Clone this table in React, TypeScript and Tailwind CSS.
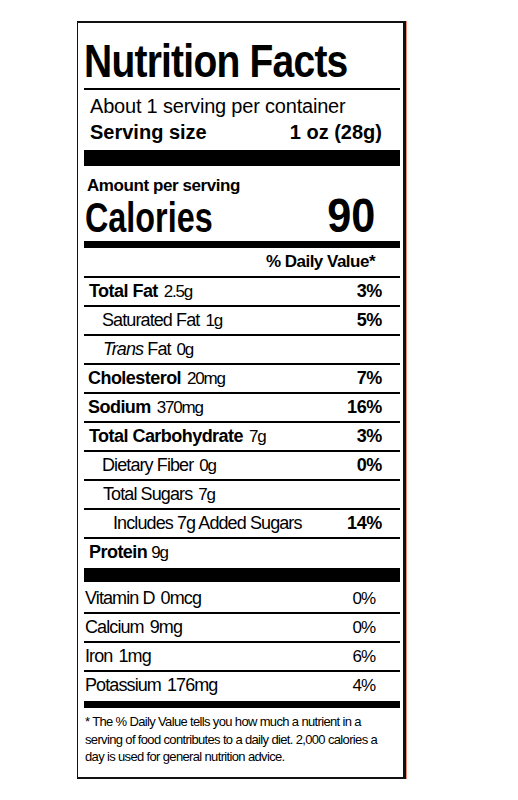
const sans = "font-['Liberation_Sans',Arial,sans-serif]";

type Nutrient = {
  label: string;
  amount: string;
  dv?: string;
  bold?: boolean;
  indent: string;
  italic?: string;
};

const nutrients: Nutrient[] = [
  { label: "Total Fat", amount: "2.5g", dv: "3%", bold: true, indent: "pl-[5px]" },
  { label: "Fat", amount: "1g", dv: "5%", indent: "pl-[18px]", italic: "Saturated" },
  { label: "Fat", amount: "0g", indent: "pl-[19px]", italic: "Trans" },
  { label: "Cholesterol", amount: "20mg", dv: "7%", bold: true, indent: "pl-[4px]" },
  { label: "Sodium", amount: "370mg", dv: "16%", bold: true, indent: "pl-[4px]" },
  { label: "Total Carbohydrate", amount: "7g", dv: "3%", bold: true, indent: "pl-[5px]" },
  { label: "Dietary Fiber", amount: "0g", dv: "0%", indent: "pl-[18px]" },
  { label: "Total Sugars", amount: "7g", indent: "pl-[19px]" },
  { label: "Includes 7g Added Sugars", amount: "", dv: "14%", indent: "pl-[29px]" },
];

const minerals = [
  { label: "Vitamin D", amount: "0mcg", dv: "0%" },
  { label: "Calcium", amount: "9mg", dv: "0%" },
  { label: "Iron", amount: "1mg", dv: "6%" },
  { label: "Potassium", amount: "176mg", dv: "4%" },
];

function NutrientRow({ n }: { n: Nutrient }) {
  return (
    <div className={`flex h-[29px] items-baseline justify-between border-b-2 border-black pr-[18px] text-[18px] leading-[27px] ${n.indent}`}>
      <div className="whitespace-nowrap">
        {n.italic === "Trans" ? (
          <span className="italic tracking-[-0.05em]">Trans </span>
        ) : null}
        {n.italic === "Saturated" ? (
          <span className="tracking-[-0.05em]">Saturated </span>
        ) : null}
        <span className={n.bold ? "font-bold tracking-[-0.03em]" : "tracking-[-0.05em]"}>{n.label}</span>
        {n.amount && <span className="ml-[6px] text-[17px] tracking-[-0.07em]">{n.amount}</span>}
      </div>
      {n.dv && <span className="font-bold tracking-[-0.02em]">{n.dv}</span>}
    </div>
  );
}

export default function App() {
  return (
    <div className={`h-[800px] w-[518px] bg-white pl-[77px] pt-[21px] text-black ${sans}`}>
      <div className="h-[758px] w-[329px] border-b-2 border-l border-r-[3px] border-t-2 border-[#111] pl-[6px] pr-[3px] pt-[14px] shadow-[1px_0_0_#f08a74]">
        {/* heading */}
        <div className="h-[47px] whitespace-nowrap text-[47px] font-bold leading-[47px]">
          <span className="inline-block origin-left scale-x-[0.83] tracking-[-0.02em]">Nutrition Facts</span>
        </div>
        <div className="mt-[4px] h-[2px] bg-black" />

        <div className="mt-[6px] whitespace-nowrap pl-[6px] text-[20px] leading-[20px] tracking-[-0.01em]">
          About 1 serving per container
        </div>
        <div className="mt-[6px] flex justify-between pl-[6px] pr-[18px] text-[20px] font-bold leading-[20px]">
          <span>Serving size</span>
          <span>1 oz (28g)</span>
        </div>
        <div className="mt-[8px] h-[16px] bg-black" />

        {/* calories */}
        <div className="mt-[11px] pl-[3px] text-[17px] font-bold leading-[17px] tracking-[-0.025em]">
          Amount per serving
        </div>
        <div className="mt-[1px] flex items-baseline justify-between pl-[1px] pr-[25px] font-bold">
          <span className="inline-block origin-left scale-x-[0.77] text-[42px] leading-[42px]">Calories</span>
          <span className="inline-block origin-right scale-x-[0.9] text-[48px] leading-[42px]">90</span>
        </div>
        <div className="mt-[2px] h-[7px] bg-black" />

        <div className="flex h-[30px] justify-end border-b-2 border-black pr-[25px] text-[17px] font-bold leading-[28px] tracking-[-0.03em]">
          % Daily Value*
        </div>

        {nutrients.map((n, i) => (
          <NutrientRow key={i} n={n} />
        ))}

        <div className="h-[29px] pl-[5px] text-[18px] leading-[27px]">
          <span className="font-bold tracking-[-0.03em]">Protein</span>
          <span className="ml-[4px] text-[17px] tracking-[-0.07em]">9g</span>
        </div>
        <div className="h-[14px] bg-black" />

        {/* vitamins and minerals */}
        {minerals.map((m, i) => (
          <div
            key={m.label}
            className={`flex items-baseline justify-between pl-[1px] pr-[25px] text-[18px] leading-[27px] ${
              i === 0 ? "h-[32px] pt-[3px]" : "h-[29px]"
            } ${i === minerals.length - 1 ? "h-[26px]" : "border-b-2 border-black"}`}
          >
            <span className="whitespace-nowrap tracking-[-0.05em]">
              {m.label}
              <span className="ml-[6px]">{m.amount}</span>
            </span>
            <span className="text-[17px] tracking-[-0.06em]">{m.dv}</span>
          </div>
        ))}
        <div className="h-[7px] bg-black" />

        <p className="mt-[5px] whitespace-nowrap pl-[1px] text-[13px] leading-[17.5px] tracking-[-0.05em]">
          * The % Daily Value tells you how much a nutrient in a
          <br />
          serving of food contributes to a daily diet. 2,000 calories a
          <br />
          day is used for general nutrition advice.
        </p>
      </div>
    </div>
  );
}
